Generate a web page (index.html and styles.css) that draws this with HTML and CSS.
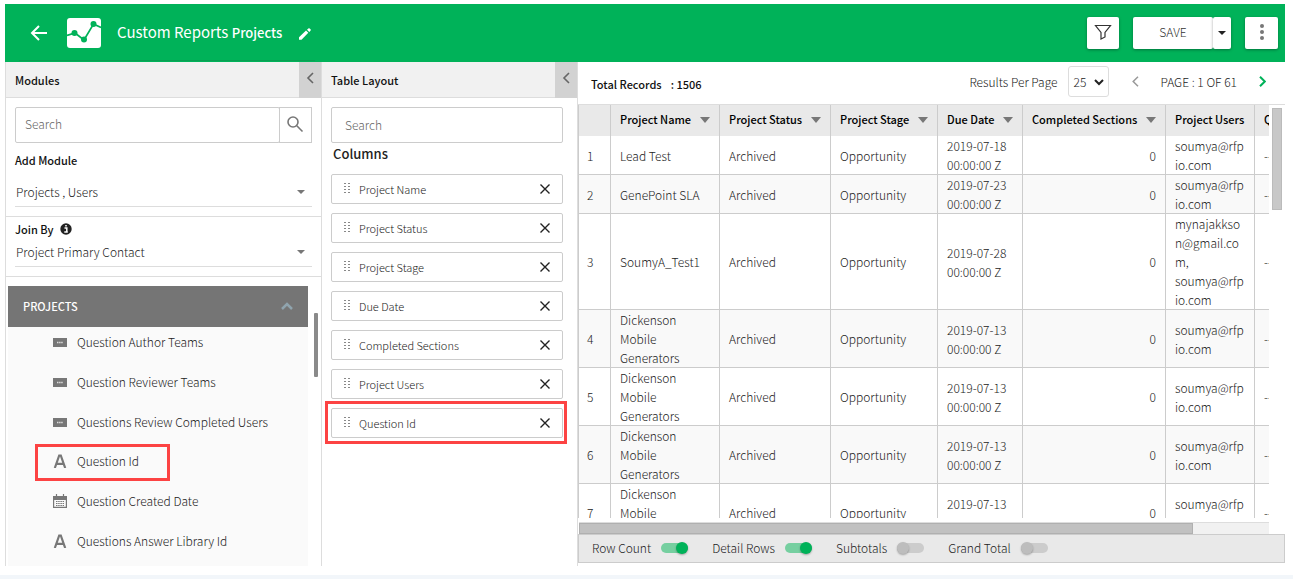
FILE: index.html
```html
<!DOCTYPE html>
<html lang="en">
<head>
<meta charset="utf-8">
<title>Custom Reports</title>
<link rel="stylesheet" href="styles.css">
</head>
<body>
<div class="app">
  <header class="topbar">
    <div class="title-group">
      <button class="bare" aria-label="Back"><svg width="18" height="18" viewBox="0 0 18 18" fill="none" stroke="#fff" stroke-width="2"><path d="M17 10H2.500M9 3L2 10l7 7"/></svg></button>
      <svg class="logo" width="34" height="30" viewBox="0 0 34 30"><rect width="34" height="30" rx="3" fill="#fff"/><path d="M0 17.500L8 15l9 7L26.500 6l7.500 3.500" fill="none" stroke="#00b259" stroke-width="1.700"/><g fill="#00b259"><circle cx="7.500" cy="15" r="3"/><circle cx="17" cy="21.500" r="3"/><circle cx="26.500" cy="6" r="3"/></g></svg>
      <h1 class="title">Custom Reports <span class="subtitle">Projects</span></h1>
      <button class="bare pencil" aria-label="Edit name"><svg width="12" height="12" viewBox="0 0 12 12" fill="#fff"><path d="M0 9.200L7 2.600 9.300 4.800 2.500 11.700H0zM8 1.800L9.300.5q.7-.6 1.400 0l.8.8q.6.700 0 1.400L10.300 4z"/></svg></button>
    </div>
    <div class="actions">
      <button class="btn filter" aria-label="Filter"><svg width="18" height="18" viewBox="0 0 18 18" fill="none" stroke="#333" stroke-width="1.200"><path d="M1.500 2.500h15L11 9.500v4.500l-4 2v-6.500z"/></svg></button>
      <div class="split"><button class="btn save">SAVE</button><button class="btn drop" aria-label="Save options"><svg width="8" height="4" viewBox="0 0 8 4"><path d="M0 0h8L4 4z" fill="#222"/></svg></button></div>
      <button class="btn more" aria-label="More"><svg width="4" height="16" viewBox="0 0 4 16" fill="#777"><circle cx="2" cy="2" r="2"/><circle cx="2" cy="8" r="2"/><circle cx="2" cy="14" r="2"/></svg></button>
    </div>
  </header>

  <main class="workspace">
    <section class="panel modules">
      <div class="panel-head"><h2 class="panel-title">Modules</h2><button class="collapse" aria-label="Collapse modules"><svg width="8" height="12" viewBox="0 0 8 12" fill="none" stroke="#666" stroke-width="1.600"><path d="M7 1L2 6l5 5"/></svg></button></div>
      <div class="search-row">
        <input class="field" type="text" placeholder="Search" aria-label="Search modules">
        <button class="search-btn" aria-label="Search"><svg width="18" height="18" viewBox="0 0 18 18" fill="none" stroke="#777" stroke-width="1.600"><circle cx="7" cy="7" r="5"/><path d="M10.800 10.800L16.500 16.500"/></svg></button>
      </div>
      <div class="module-pick">
        <label class="label" for="module">Add Module</label>
        <div class="picker"><select id="module"><option>Projects , Users</option></select></div>
      </div>
      <div class="join-pick">
        <label class="label" for="join">Join By <svg class="info" width="12" height="12" viewBox="0 0 12 12"><circle cx="6" cy="6" r="5.700" fill="#222"/><path d="M4.500 5h2.300v3.500M4.300 9h3.500M5.200 2.800h1.600" fill="none" stroke="#fff" stroke-width="1.500"/></svg></label>
        <div class="picker"><select id="join"><option>Project Primary Contact</option></select></div>
      </div>
      <div class="tree-row">
        <div class="tree">
          <button class="group">PROJECTS <svg width="12" height="8" viewBox="0 0 12 8" fill="none" stroke="#90a4ae" stroke-width="2.500"><path d="M1 7l5-5 5 5"/></svg></button>
          <ul class="attrs">
            <li><svg class="ico" width="14" height="14" viewBox="0 0 14 14"><rect x="0" y="3" width="14" height="9" fill="#777"/><path d="M4 7.500h6" stroke="#ddd" stroke-width="1.500" stroke-dasharray="1.500 .6"/></svg>Question Author Teams</li>
            <li><svg class="ico" width="14" height="14" viewBox="0 0 14 14"><rect x="0" y="3" width="14" height="9" fill="#777"/><path d="M4 7.500h6" stroke="#ddd" stroke-width="1.500" stroke-dasharray="1.500 .6"/></svg>Question Reviewer Teams</li>
            <li><svg class="ico" width="14" height="14" viewBox="0 0 14 14"><rect x="0" y="3" width="14" height="9" fill="#777"/><path d="M4 7.500h6" stroke="#ddd" stroke-width="1.500" stroke-dasharray="1.500 .6"/></svg>Questions Review Completed Users</li>
            <li class="marked"><svg class="ico" width="14" height="14" viewBox="0 0 14 14" fill="none" stroke="#777" stroke-width="2.200"><path d="M1.800 14L6.200 1.500h1.600L12.200 14M3.500 9.800h7"/></svg>Question Id</li>
            <li><svg class="ico" width="14" height="14" viewBox="0 0 14 14"><path d="M0 2h14v4H0z" fill="#777"/><path d="M.6 5v8.400h12.800V5M3.500 0v4M10.500 0v4" fill="none" stroke="#777" stroke-width="1.200"/><path d="M3 7.500h8M3 9.500h8M3 11.500h8" stroke="#777" stroke-dasharray="1.500 .7"/></svg>Question Created Date</li>
            <li><svg class="ico" width="14" height="14" viewBox="0 0 14 14" fill="none" stroke="#777" stroke-width="2.200"><path d="M1.800 14L6.200 1.500h1.600L12.200 14M3.500 9.800h7"/></svg>Questions Answer Library Id</li>
          </ul>
        </div>
        <div class="tree-thumb"></div>
      </div>
    </section>

    <section class="panel layout">
      <div class="panel-head"><h2 class="panel-title">Table Layout</h2><button class="collapse" aria-label="Collapse layout"><svg width="8" height="12" viewBox="0 0 8 12" fill="none" stroke="#666" stroke-width="1.600"><path d="M7 1L2 6l5 5"/></svg></button></div>
      <div class="layout-body">
        <input class="field wide" type="text" placeholder="Search" aria-label="Search columns">
        <h3 class="columns-title">Columns</h3>
        <ul class="chips">
          <li><i class="grip"></i><span>Project Name</span><button class="bare" aria-label="Remove"><svg width="10" height="10" viewBox="0 0 10 10" stroke="#222" stroke-width="1.400"><path d="M.5.5l9 9M9.500.5l-9 9"/></svg></button></li>
          <li><i class="grip"></i><span>Project Status</span><button class="bare" aria-label="Remove"><svg width="10" height="10" viewBox="0 0 10 10" stroke="#222" stroke-width="1.400"><path d="M.5.5l9 9M9.500.5l-9 9"/></svg></button></li>
          <li><i class="grip"></i><span>Project Stage</span><button class="bare" aria-label="Remove"><svg width="10" height="10" viewBox="0 0 10 10" stroke="#222" stroke-width="1.400"><path d="M.5.5l9 9M9.500.5l-9 9"/></svg></button></li>
          <li><i class="grip"></i><span>Due Date</span><button class="bare" aria-label="Remove"><svg width="10" height="10" viewBox="0 0 10 10" stroke="#222" stroke-width="1.400"><path d="M.5.5l9 9M9.500.5l-9 9"/></svg></button></li>
          <li><i class="grip"></i><span>Completed Sections</span><button class="bare" aria-label="Remove"><svg width="10" height="10" viewBox="0 0 10 10" stroke="#222" stroke-width="1.400"><path d="M.5.5l9 9M9.500.5l-9 9"/></svg></button></li>
          <li><i class="grip"></i><span>Project Users</span><button class="bare" aria-label="Remove"><svg width="10" height="10" viewBox="0 0 10 10" stroke="#222" stroke-width="1.400"><path d="M.5.5l9 9M9.500.5l-9 9"/></svg></button></li>
          <li class="marked"><i class="grip"></i><span>Question Id</span><button class="bare" aria-label="Remove"><svg width="10" height="10" viewBox="0 0 10 10" stroke="#222" stroke-width="1.400"><path d="M.5.5l9 9M9.500.5l-9 9"/></svg></button></li>
        </ul>
      </div>
    </section>

    <section class="results">
      <div class="results-head">
        <div class="total"><span>Total Records</span><span>: 1506</span></div>
        <div class="pager">
          <label for="per">Results Per Page</label>
          <div class="per"><select id="per"><option>25</option></select><svg width="10" height="7" viewBox="0 0 10 7" fill="none" stroke="#222" stroke-width="2"><path d="M1 1l4 4 4-4"/></svg></div>
          <button class="bare prev" aria-label="Previous page"><svg width="7" height="11" viewBox="0 0 7 11" fill="none" stroke="#999" stroke-width="1.500"><path d="M6 .7L1.200 5.500 6 10.300"/></svg></button>
          <span class="page">PAGE : 1 OF 61</span>
          <button class="bare" aria-label="Next page"><svg width="7" height="11" viewBox="0 0 7 11" fill="none" stroke="#00b259" stroke-width="2"><path d="M1 .7l4.800 4.800L1 10.300"/></svg></button>
        </div>
      </div>
      <div class="grid-area">
        <div class="grid-clip">
          <table class="grid">
            <colgroup><col class="c-num"><col class="c-name"><col class="c-status"><col class="c-stage"><col class="c-due"><col class="c-sections"><col class="c-users"><col class="c-id"></colgroup>
            <thead><tr><th></th><th class="sort">Project Name</th><th class="sort">Project Status</th><th class="sort">Project Stage</th><th class="sort">Due Date</th><th class="sort">Completed Sections</th><th>Project Users</th><th>Question Id</th></tr></thead>
            <tbody>
              <tr><td>1</td><td>Lead Test</td><td>Archived</td><td>Opportunity</td><td>2019-07-18 00:00:00 Z</td><td class="num">0</td><td class="mail">soumya@rfpio.com</td><td>--</td></tr>
              <tr><td>2</td><td>GenePoint SLA</td><td>Archived</td><td>Opportunity</td><td>2019-07-23 00:00:00 Z</td><td class="num">0</td><td class="mail">soumya@rfpio.com</td><td>--</td></tr>
              <tr><td>3</td><td>SoumyA_Test1</td><td>Archived</td><td>Opportunity</td><td>2019-07-28 00:00:00 Z</td><td class="num">0</td><td class="mail">mynajakkson@gmail.com, soumya@rfpio.com</td><td>--</td></tr>
              <tr><td>4</td><td>Dickenson Mobile Generators</td><td>Archived</td><td>Opportunity</td><td>2019-07-13 00:00:00 Z</td><td class="num">0</td><td class="mail">soumya@rfpio.com</td><td>--</td></tr>
              <tr><td>5</td><td>Dickenson Mobile Generators</td><td>Archived</td><td>Opportunity</td><td>2019-07-13 00:00:00 Z</td><td class="num">0</td><td class="mail">soumya@rfpio.com</td><td>--</td></tr>
              <tr><td>6</td><td>Dickenson Mobile Generators</td><td>Archived</td><td>Opportunity</td><td>2019-07-13 00:00:00 Z</td><td class="num">0</td><td class="mail">soumya@rfpio.com</td><td>--</td></tr>
              <tr><td>7</td><td>Dickenson Mobile Generators</td><td>Archived</td><td>Opportunity</td><td>2019-07-13 00:00:00 Z</td><td class="num">0</td><td class="mail">soumya@rfpio.com</td><td>--</td></tr>
            </tbody>
          </table>
        </div>
        <div class="v-track"><div class="v-thumb"></div></div>
      </div>
      <div class="h-track"><div class="h-thumb"></div></div>
      <div class="options">
        <label>Row Count <input type="checkbox" class="toggle" checked></label>
        <label>Detail Rows <input type="checkbox" class="toggle" checked></label>
        <label>Subtotals <input type="checkbox" class="toggle"></label>
        <label>Grand Total <input type="checkbox" class="toggle"></label>
      </div>
    </section>
  </main>
  <div class="base"></div>
</div>
</body>
</html>
```

FILE: styles.css
```css
* { box-sizing: border-box; }
body { margin: 0; background: #fff; color: #222; font-family: "Noto Sans CJK SC", "Noto Sans", sans-serif; font-size: 12px; font-weight: 300; line-height: 20px; }
button, input, select { font: inherit; color: inherit; margin: 0; }
h1, h2, h3, ul { margin: 0; padding: 0; font-weight: 500; }
ul { list-style: none; font-weight: 300; }
svg { display: block; flex: none; }
.bare { background: none; border: 0; padding: 0; }

.app { height: 100vh; min-height: 420px; display: flex; flex-direction: column; padding-top: 4px; }
.topbar { height: 58px; flex: none; margin: 0 8px 0 5px; padding: 0 7px 0 14px; background: #00b259; color: #fff; display: flex; justify-content: space-between; }
.title-group { min-width: 296px; margin-bottom: 1px; padding-left: 11px; border-bottom: 1px solid #0a9f53; display: flex; align-items: center; }
.logo { margin: 2px 16px 0 19px; }
.title { font-size: 15px; font-weight: 400; margin-right: 17px; white-space: nowrap; }
.subtitle { font-size: 13px; font-weight: 500; }
.pencil { margin-top: 3px; }
.actions { display: flex; align-items: center; gap: 14px; }
.btn { height: 32px; border: 0; padding: 0 0 2px; border-radius: 2px; background: #fff; color: #333; display: flex; align-items: center; justify-content: center; box-shadow: 0 1px 3px rgba(0,0,0,.35); }
.filter { width: 32px; }
.more { width: 33px; }
.split { display: flex; }
.save { width: 80px; }
.drop { width: 18px; padding: 0; }

.workspace { flex: 1; min-height: 0; display: flex; margin: 0 8px 0 5px; }
.panel { flex: none; display: flex; flex-direction: column; border-right: 1px solid #ddd; }
.modules { width: 317px; border-left: 1px solid #ddd; }
.layout { width: 256px; }
.panel-head { height: 36px; flex: none; display: flex; justify-content: space-between; align-items: center; padding-left: 9px; background: #f1f1f1; border-bottom: 1px solid #ddd; color: #111; }
.panel-title { font-size: 11px; }
.collapse { width: 22px; height: 36px; margin-bottom: -1px; padding: 0 0 4px; border: 0; background: #d2d2d2; display: flex; align-items: center; justify-content: center; }
.field { min-width: 0; height: 36px; border: 1px solid #ccc; border-radius: 2px; background: #fff; padding: 0 9px 3px; outline: 0; }
.field::placeholder { color: #666; opacity: 1; }
.search-row { display: flex; margin: 9px 9px 0; }
.search-row .field { flex: 1; }
.search-btn { width: 33px; height: 36px; margin-left: -1px; border: 1px solid #ccc; background: #fff; padding: 0 0 2px 6px; display: flex; align-items: center; }
.label { display: flex; align-items: center; gap: 7px; font-size: 11px; font-weight: 500; color: #111; }
.module-pick { padding: 7px 9px 9px; border-bottom: 1px solid #ddd; }
.module-pick .picker { padding: 7px 0 4px; margin-top: 4px; }
.join-pick { padding: 2px 9px 9px; border-bottom: 1px solid #ddd; }
.join-pick .picker { padding: 2px 0 4px; }
.picker { position: relative; border-bottom: 1px solid #ddd; }
.picker select { display: block; width: 100%; height: 21px; border: 0; padding: 0 1px; background: none; appearance: none; outline: 0; }
.picker::after { content: ""; position: absolute; right: 7px; bottom: 12px; border: 4px solid transparent; border-top-color: #777; border-bottom: 0; }

.tree-row { flex: 1; min-height: 0; display: flex; padding: 9px 3px 0 2px; }
.tree { flex: 1; margin-right: 6px; display: flex; flex-direction: column; background: #fafafa; }
.tree-thumb { width: 4px; height: 64px; margin-top: 27px; border-radius: 1px; background: #8a8a8a; }
.group { height: 41px; flex: none; border: 0; padding: 0 15px 1px; background: #757575; color: #fff; font-size: 11px; font-weight: 500; display: flex; align-items: center; justify-content: space-between; }
.attrs { flex: 1; min-height: 0; padding: 5px 0 15px; display: grid; align-content: space-between; }
.attrs li { position: relative; display: flex; align-items: center; padding-left: 45px; }
.ico { margin-right: 10px; }
.attrs .marked { justify-self: start; padding-right: 31px; }
.attrs .marked::after { content: ""; position: absolute; left: 27px; top: -7px; bottom: -10px; right: 0; border: 3px solid #fc4343; }

.layout-body { padding: 9px 14px 0 9px; display: flex; flex-direction: column; }
.wide { padding: 0 13px 2px; }
.columns-title { font-size: 13px; line-height: 22px; padding-left: 2px; color: #222; }
.chips { padding-top: 9px; display: flex; flex-direction: column; gap: 9px; }
.chips li { position: relative; height: 30px; border: 1px solid #ccc; border-radius: 2px; padding: 0 12px; display: flex; align-items: center; font-size: 11px; }
.chips span { flex: 1; }
.chips .marked::after { content: ""; position: absolute; inset: -8px -5px -7px -7px; border: 3px solid #fc4343; pointer-events: none; }
.grip { width: 6px; height: 12px; margin-right: 9px; background: repeating-linear-gradient(#888 0 1px, transparent 1px 3px); mask: linear-gradient(90deg, #000 2px, transparent 2px 4px, #000 4px); }

.results { flex: 1; min-width: 0; display: flex; flex-direction: column; }
.results-head { height: 43px; flex: none; display: flex; align-items: center; justify-content: space-between; padding: 0 19px 3px 13px; border-bottom: 1px solid #ddd; }
.total { display: flex; gap: 9px; padding-top: 4px; font-size: 11px; font-weight: 500; color: #111; }
.pager { display: flex; align-items: center; white-space: nowrap; }
.per { position: relative; margin: 0 23px 0 11px; }
.per select { display: block; width: 41px; height: 31px; padding: 0 4px; border: 1px solid #ddd; border-radius: 3px; background: #fff; appearance: none; }
.per svg { position: absolute; right: 5px; top: 13px; }
.page { margin: 0 22px 0 21px; }
.grid-area { flex: 1; min-height: 0; display: flex; }
.grid-clip { flex: 1; min-width: 0; overflow: hidden; border-left: 1px solid #ccc; }
.grid { width: 740px; min-width: 100%; table-layout: fixed; border-collapse: separate; border-spacing: 0; line-height: 19px; }
.c-num { width: 32px; } .c-name { width: 109px; } .c-status { width: 111px; } .c-stage { width: 107px; }
.c-due { width: 85px; } .c-sections { width: 143px; } .c-users { width: 89px; }
.grid th, .grid td { padding: 0 8px 0 9px; text-align: left; border-right: 1px solid #ccc; vertical-align: middle; }
.grid td { border-bottom: 1px solid #ccc; }
.grid td:first-child { padding: 0 8px; }
.grid th { height: 31px; padding-bottom: 2px; background: #e9e9e9; color: #000; font-size: 11px; font-weight: 500; white-space: nowrap; }
.grid tbody tr:nth-child(even) { background: #f9f9f9; }
.grid .num { padding-right: 9px; text-align: right; }
.mail { word-break: break-word; }
.sort::after { content: ""; display: inline-block; margin-left: 9px; vertical-align: 1px; border: 5px solid transparent; border-top: 6px solid #777; border-bottom: 0; }
.v-track { width: 16px; padding: 3px 3px 0; }
.v-thumb { width: 10px; height: 102px; background: #c8c8c8; border: 1px solid #bbb; }
.h-track { height: 12px; flex: none; margin: 4px 16px 0 1px; background: #f1f1f1; border-top: 1px solid #ddd; }
.h-thumb { width: 89%; height: 11px; background: #c1c1c1; border: 1px solid #b0b0b0; }
.options { height: 29px; flex: none; margin-bottom: 3px; padding: 0 13px 1px; display: flex; align-items: center; gap: 24px; background: #e9e9e9; border: 1px solid #ccc; }
.options label { display: flex; align-items: center; gap: 10px; white-space: nowrap; }
.toggle { appearance: none; position: relative; width: 27px; height: 10px; border-radius: 5px; background: #ccc; }
.toggle::after { content: ""; position: absolute; left: 0; top: -1px; width: 12px; height: 12px; border-radius: 50%; background: #bdbdbd; box-shadow: 0 1px 2px rgba(0,0,0,.3); }
.toggle:checked { background: #76cfa0; }
.toggle:checked::after { left: auto; right: 0; background: #00b259; }
.base { height: 4px; flex: none; margin-top: 9px; background: #f2f6fa; }
```
